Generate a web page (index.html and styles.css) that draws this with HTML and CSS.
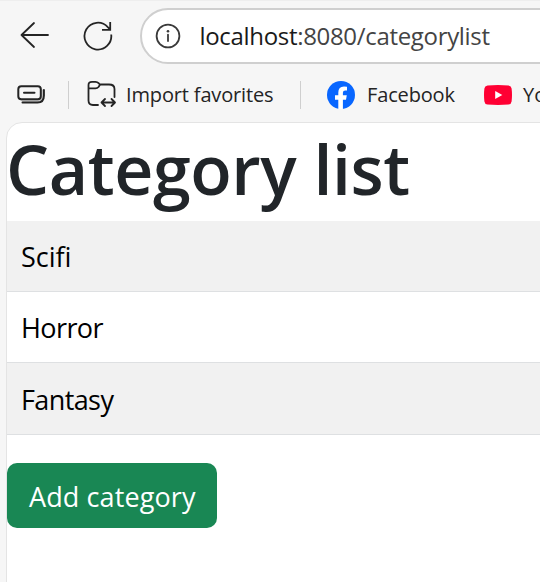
FILE: index.html
```html
<!DOCTYPE html>
<html lang="en">
<head>
<meta charset="utf-8">
<title>Category list</title>
<link rel="stylesheet" href="styles.css">
</head>
<body>
<header class="toolbar">
  <svg class="back" width="30" height="28" viewBox="0 0 30 28"><path d="M28 14H1.5M14 2 1.5 14 14 26"/></svg>
  <svg class="reload" width="30" height="30" viewBox="0 0 30 30"><path d="M28.2 13.5A13.4 13.4 0 1 1 24.8 6.1L27.2 8.6M27.2 1V8.8H19"/></svg>
  <div class="address">
    <svg class="info" width="26" height="26" viewBox="0 0 26 26"><circle cx="13" cy="13" r="11.4"/><path d="M13 11.7V18"/><circle class="dot" cx="13" cy="8.2" r="1.3"/></svg>
    <span class="url"><span class="host">localhost</span>:8080/categorylist</span>
  </div>
</header>
<nav class="favorites">
  <svg class="tabs" width="30" height="22" viewBox="0 0 30 22"><path class="shade" d="M4 16h18q3 0 3-3V4l2 2v8q0 5-5 5H8z"/><rect x="2.300" y="2.300" width="22.5" height="13" rx="3"/><path d="M8 8.800H18.500M6.500 18.500H21.500Q27.900 18.500 27.900 11.500V6"/></svg>
  <span class="divider"></span>
  <svg class="folder" width="30" height="28" viewBox="0 0 30 28"><path d="M11 25H6Q1.5 25 1.5 20.500V5Q1.500 1.800 5 1.800H8.500Q10.300 1.800 11.600 3.200L12.800 4.500H22Q27.500 4.500 27.500 9V17M1.500 8.300H8.500Q10.300 8.300 11.500 7L13 4.700M14.500 22.500H27.800M18 19 14.500 22.500 18 26M24.500 19 28 22.500 24.500 26"/></svg>
  <span class="fav import">Import favorites</span>
  <span class="divider second"></span>
  <svg class="facebook" width="28" height="28" viewBox="0 0 28 28"><circle cx="14" cy="14" r="14"/><path d="M11.300 28V18.700H8V14.200H11.300V11.500Q11.300 5.500 17 5.500Q18.700 5.500 20 5.800V9.600H18.200Q15.900 9.600 15.900 11.800V14.200H19.800L19 18.700H15.900V28Z"/></svg>
  <span class="fav fb">Facebook</span>
  <svg class="youtube" width="28" height="20" viewBox="0 0 28 20"><path class="plate" d="M3.500.5Q14-.4 24.500.5 27.300.8 27.600 3.500 28.400 10 27.600 16.500 27.300 19.200 24.500 19.500 14 20.400 3.500 19.500.7 19.200.4 16.500-.4 10 .4 3.500.7.800 3.500.5Z"/><path class="play" d="M11.200 5.900 18.300 10 11.200 14.100Z"/></svg>
  <span class="fav yt">YouTube</span>
</nav>
<main class="page">
  <h1>Category list</h1>
  <table>
    <tbody>
      <tr><td>Scifi</td></tr>
      <tr><td class="tight">Horror</td></tr>
      <tr class="last"><td class="tight">Fantasy</td></tr>
    </tbody>
  </table>
  <a class="button">Add category</a>
</main>
</body>
</html>
```

FILE: styles.css
```css
* { box-sizing: border-box; }
html { overflow: hidden; }
body {
  margin: 0;
  width: 540px;
  height: 582px;
  overflow: hidden;
  background: #f6f6f6;
  border-top: 1px solid #eeeeee;
  font-family: "Open Sans", "Noto Sans", sans-serif;
}
svg { flex: none; fill: none; stroke: #242424; stroke-width: 1.8; stroke-linecap: round; stroke-linejoin: round; }
.toolbar {
  display: flex;
  align-items: center;
  height: 69px;
  padding-left: 20px;
}
.back { margin-top: -2px; }
.reload { margin-left: 33px; stroke-linecap: butt; stroke-linejoin: miter; }
.address {
  display: flex;
  align-items: center;
  flex: none;
  width: 440px;
  height: 56px;
  margin-left: 27px;
  padding-left: 13px;
  border: 2px solid #cfcfcf;
  border-radius: 28px;
  background: #fff;
}
.info { stroke: #3a3a3a; }
.info .dot { fill: #3a3a3a; stroke: none; }
.url {
  margin-left: 18.5px;
  color: #444;
  font-size: 24px;
  letter-spacing: -0.32px;
  white-space: nowrap;
}
.host { color: #1a1a1a; }
.favorites {
  display: flex;
  align-items: center;
  height: 52px;
  padding: 0 0 2px 16px;
  white-space: nowrap;
}
.tabs { stroke-width: 2; }
.tabs .shade { fill: #ccc; stroke: none; }
.divider { flex: none; width: 1px; height: 28px; margin-left: 22px; background: #cfcfcf; }
.folder { margin: -2px 0 0 18px; stroke-width: 1.8; }
.fav { flex: none; color: #242424; font-size: 20px; padding-bottom: 2px; }
.import { width: 148px; margin-left: 9px; letter-spacing: -0.15px; }
.second { margin-left: 26px; }
.facebook { margin-left: 26px; stroke: none; fill: #fff; }
.facebook circle { fill: #0866ff; }
.fb { width: 89px; margin-left: 12px; letter-spacing: -0.15px; }
.youtube { margin-left: 28px; stroke: none; }
.plate { fill: #ff0033; }
.play { fill: #fff; }
.yt { margin-left: 11px; }
.page {
  width: 560px;
  height: 480px;
  margin-left: 6px;
  border: 1px solid #e4e4e4;
  border-top-left-radius: 16px;
  background: #fff;
}
h1 {
  height: 98px;
  margin: 0 0 0 -1px;
  color: #212529;
  font-size: 68px;
  font-weight: 600;
  line-height: 91px;
  letter-spacing: -0.42px;
  white-space: nowrap;
}
table { width: 100%; border-spacing: 0; }
td {
  height: 71px;
  padding: 2px 14px 0;
  border-bottom: 1px solid #dee0e2;
  background: #fff;
  color: #000;
  font-size: 27px;
  line-height: 40px;
}
tr:nth-child(odd) td { background: #f1f1f1; }
.tight { letter-spacing: -0.6px; }
.last td { height: 72px; }
.button {
  display: flex;
  align-items: center;
  width: 210px;
  height: 65px;
  margin-top: 28px;
  padding: 2px 0 0 22px;
  border-radius: 10px;
  background: #198754;
  color: #fff;
  font-size: 27px;
  letter-spacing: 0.1px;
  white-space: nowrap;
}
```
